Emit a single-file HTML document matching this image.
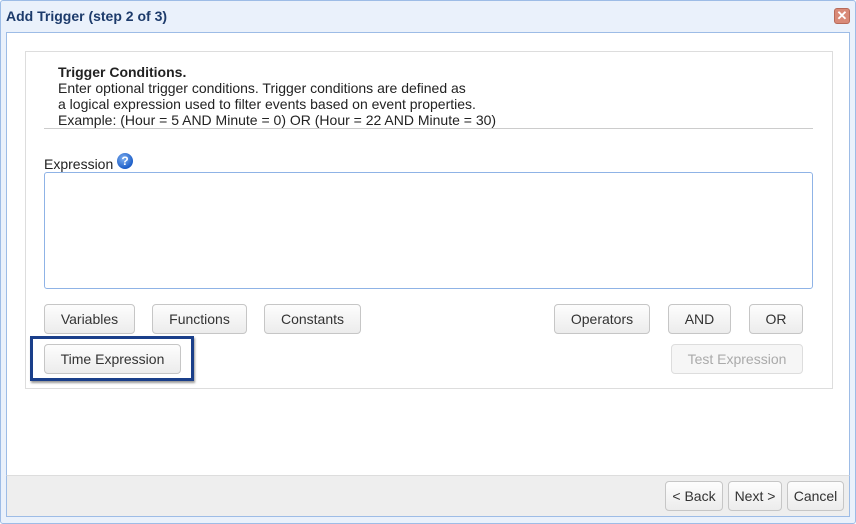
<!DOCTYPE html>
<html><head><style>
*{box-sizing:border-box;margin:0;padding:0}
body{width:856px;height:524px;background:#fff;font-family:"Liberation Sans",Arial,sans-serif;font-size:14px;color:#222;position:relative;overflow:hidden}
.dlg{position:absolute;left:0;top:0;width:856px;height:524px;border:1px solid #9dbce6;background:#eaf1fb;border-radius:3px}
.title{position:absolute;left:6px;top:8px;font-weight:bold;font-size:14px;color:#1d3b6b}
.close{position:absolute;left:834px;top:8px;width:16px;height:16px;background:#d98a78;border:1px solid #b86a58;border-radius:3px;color:#fff;font-size:13px;font-weight:bold;line-height:14px;text-align:center}
.content{position:absolute;left:6px;top:32px;width:844px;height:444px;background:#fff;border:1px solid #9dbce6;border-bottom:none}
.footer{position:absolute;left:6px;top:475px;width:844px;height:42px;background:#eeeeee;border:1px solid #9dbce6;border-top:1px solid #ddd}
.panel{position:absolute;left:25px;top:51px;width:808px;height:338px;border:1px solid #ddd}
.abs{position:absolute}
.btn{position:absolute;height:30px;border:1px solid #c6c6c6;border-radius:4px;background:linear-gradient(#fdfdfd,#ececec);font-size:14px;color:#333;text-align:center;line-height:28px}
.dis{color:#aaa;border-color:#ddd;background:#f6f6f6}
</style></head><body>
<div class="dlg"></div>
<div class="title">Add Trigger (step 2 of 3)</div>
<div class="close">✕</div>
<div class="content"></div>
<div class="footer"></div>
<div class="panel"></div>
<div class="abs" style="left:58px;top:64px;line-height:16px;font-size:14px">
<b>Trigger Conditions.</b><br>Enter optional trigger conditions. Trigger conditions are defined as<br>a logical expression used to filter events based on event properties.<br>Example: (Hour = 5 AND Minute = 0) OR (Hour = 22 AND Minute = 30)</div>
<div class="abs" style="left:44px;top:128px;width:769px;height:1px;background:#ccc"></div>
<div class="abs" style="left:44px;top:156px">Expression</div>
<div class="abs" style="left:117px;top:153px;width:16px;height:16px;border-radius:50%;background:radial-gradient(circle at 40% 35%,#7fb0f0,#1e5fc8 70%);color:#fff;font-weight:bold;font-size:12px;text-align:center;line-height:16px">?</div>
<div class="abs" style="left:44px;top:172px;width:769px;height:117px;border:1px solid #8fb3e6;border-radius:3px"></div>
<div class="btn" style="left:44px;top:304px;width:91px">Variables</div>
<div class="btn" style="left:152px;top:304px;width:95px">Functions</div>
<div class="btn" style="left:264px;top:304px;width:97px">Constants</div>
<div class="btn" style="left:554px;top:304px;width:96px">Operators</div>
<div class="btn" style="left:668px;top:304px;width:63px">AND</div>
<div class="btn" style="left:749px;top:304px;width:54px">OR</div>
<div class="abs" style="left:30px;top:336px;width:164px;height:45px;border:3px solid #1a3f8a;box-shadow:1px 2px 2px rgba(0,0,0,.4)"></div>
<div class="btn" style="left:44px;top:344px;width:137px">Time Expression</div>
<div class="btn dis" style="left:671px;top:344px;width:132px">Test Expression</div>
<div class="btn" style="left:665px;top:481px;width:58px">&lt; Back</div>
<div class="btn" style="left:728px;top:481px;width:54px">Next &gt;</div>
<div class="btn" style="left:787px;top:481px;width:57px">Cancel</div>
</body></html>
